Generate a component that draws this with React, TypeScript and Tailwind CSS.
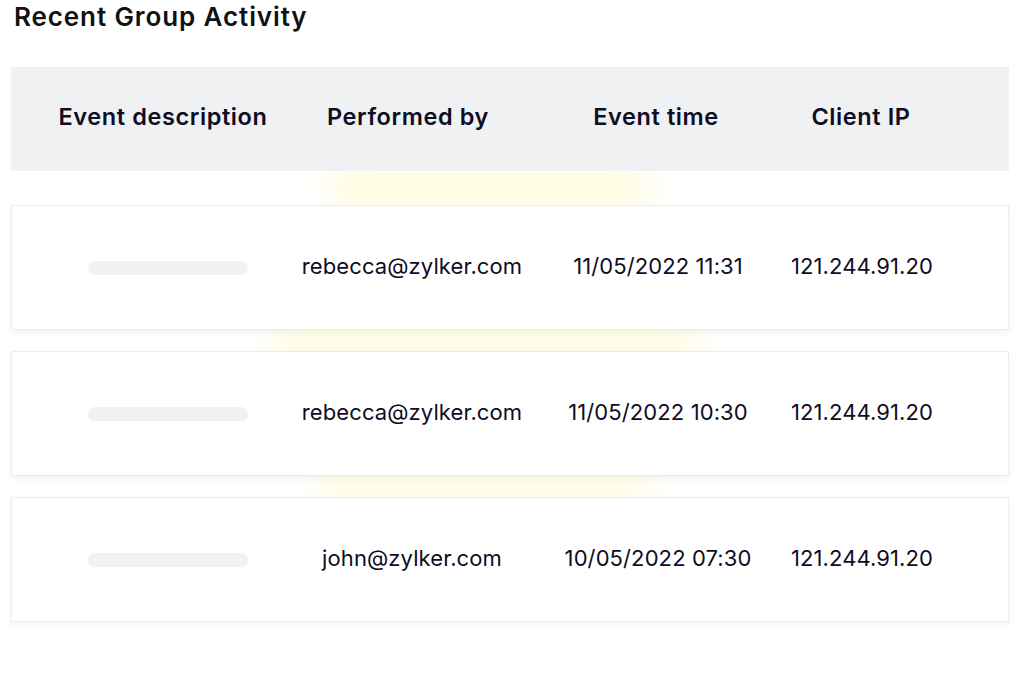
import React from "react";

const rows = [
  { by: "rebecca@zylker.com", time: "11/05/2022 11:31", ip: "121.244.91.20" },
  { by: "rebecca@zylker.com", time: "11/05/2022 10:30", ip: "121.244.91.20" },
  { by: "john@zylker.com", time: "10/05/2022 07:30", ip: "121.244.91.20" },
];

const grid = "grid grid-cols-[304px_186px_310px_100px] items-center";

export default function App() {
  return (
    <div className="relative w-[1021px] h-[686px] bg-white overflow-hidden text-[#0e0d24]" style={{ fontFamily: "Inter, 'Noto Sans', sans-serif" }}>
      <div className="absolute left-[330px] top-[172px] w-[320px] h-[32px] rounded-full bg-[#fff8c4] blur-[16px] opacity-70" />
      <div className="absolute left-[270px] top-[327px] w-[430px] h-[26px] rounded-full bg-[#fff8c4] blur-[16px] opacity-70" />
      <div className="absolute left-[320px] top-[473px] w-[330px] h-[26px] rounded-full bg-[#fff8c4] blur-[16px] opacity-70" />
      <div className="relative px-[11px] pr-[12px]">
        <h1 className="pl-[3px] h-[67px] text-[26px] leading-[34px] font-semibold text-[#111] tracking-[0.9px]">Recent Group Activity</h1>
        <div className={`${grid} h-[104px] pb-[4px] bg-[#f0f1f3] text-[23.5px] font-semibold tracking-[0.6px]`}>
          <div className="flex justify-center whitespace-nowrap">Event description</div>
          <div className="flex justify-center whitespace-nowrap">Performed by</div>
          <div className="flex justify-center whitespace-nowrap">Event time</div>
          <div className="flex justify-center whitespace-nowrap">Client IP</div>
        </div>
        <div className="flex flex-col gap-[21px] mt-[34px]">
          {rows.map((r, i) => (
            <div key={i} className={`${grid} h-[125px] pb-[3px] bg-white border border-[#ececec] shadow-[0_3px_8px_rgba(0,0,0,0.05)] text-[22px] tracking-[0.1px]`}>
              <div className="flex justify-center pl-[8px] pt-[3px]">
                <div className="w-[160px] h-[14px] rounded-full bg-[#f1f1f1]" />
              </div>
              <div className="flex justify-center whitespace-nowrap pl-[6px]">{r.by}</div>
              <div className="flex justify-center whitespace-nowrap pl-[2px]">{r.time}</div>
              <div className="flex justify-center whitespace-nowrap">{r.ip}</div>
            </div>
          ))}
        </div>
      </div>
    </div>
  );
}
